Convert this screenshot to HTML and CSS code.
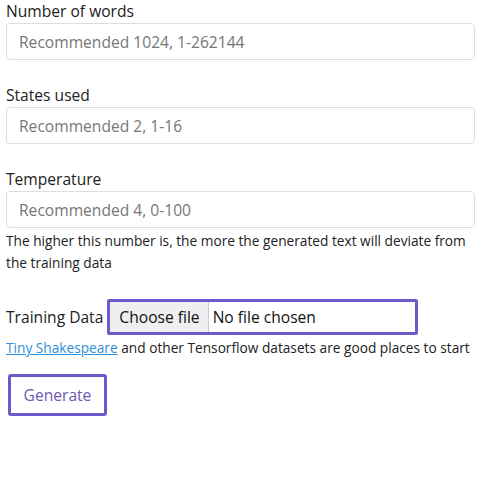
FILE: index.html
```html
<!DOCTYPE html>
<html>
<head>
<meta charset="utf-8">
<link rel="stylesheet" href="styles.css">
</head>
<body>
<form class="form">
  <div class="field">
    <label class="label">Number of words</label>
    <input class="input" type="text" placeholder="Recommended 1024, 1-262144">
  </div>
  <div class="field">
    <label class="label">States used</label>
    <input class="input" type="text" placeholder="Recommended 2, 1-16">
  </div>
  <div class="field field-last">
    <label class="label">Temperature</label>
    <input class="input" type="text" placeholder="Recommended 4, 0-100">
    <p class="help">The higher this number is, the more the generated text will deviate from the training data</p>
  </div>
  <div class="file-row">
    <span class="file-label">Training Data</span>
    <div class="file-box"><span class="file-btn">Choose file</span><span class="file-text">No file chosen</span></div>
  </div>
  <p class="note"><a class="link" href="#">Tiny Shakespeare</a> and other Tensorflow datasets are good places to start</p>
  <button class="generate" type="button">Generate</button>
</form>
</body>
</html>
```
FILE: styles.css
```css
html, body { margin: 0; padding: 0; background: #fff; }
body {
  font-family: "Open Sans", "Liberation Sans", sans-serif;
  color: #222;
  font-size: 15.6px;
}
.form { padding: 0 7px 0 6px; display: flex; flex-direction: column; }
.field { display: flex; flex-direction: column; margin-bottom: 24px; }
.field-last { margin-bottom: 25px; }
.label { font-size: 15.6px; line-height: 23px; }
.input {
  box-sizing: border-box;
  height: 37px;
  width: 100%;
  border: 1px solid #ddd;
  border-radius: 4px;
  padding: 0 12px;
  font-family: "Open Sans", sans-serif;
  font-size: 15.6px;
  color: #333;
  outline: none;
}
.input::placeholder { color: #777; }
.help { margin: 0; font-size: 13.7px; line-height: 22px; padding-top: 2px; }
.file-row { display: flex; align-items: center; gap: 4px; }
.file-label { font-size: 15.6px; line-height: 23px; }
.file-box {
  box-sizing: border-box;
  display: flex; align-items: stretch;
  width: 311px; height: 36px;
  border: 3px solid #6f58c9;
  border-radius: 2px;
  font-family: "Open Sans", sans-serif;
  font-size: 15.6px;
}
.file-btn { background: #efeff0; border-right: 1px solid #ccc; padding: 0 8px 0 9px; display: flex; align-items: center; color: #111; }
.file-text { padding: 0 4px; display: flex; align-items: center; color: #111; }
.note { margin: 2px 0 0; font-size: 13.7px; line-height: 22px; white-space: nowrap; }
.link { color: #2f8fd8; }
.generate {
  align-self: flex-start;
  margin: 15px 0 0 2px;
  box-sizing: border-box;
  width: 99px; height: 42px;
  background: #fff;
  border: 3px solid #6f58c9;
  border-radius: 3px;
  color: #6a5bb0;
  font-family: "Open Sans", sans-serif;
  font-size: 15.6px;
}
```
